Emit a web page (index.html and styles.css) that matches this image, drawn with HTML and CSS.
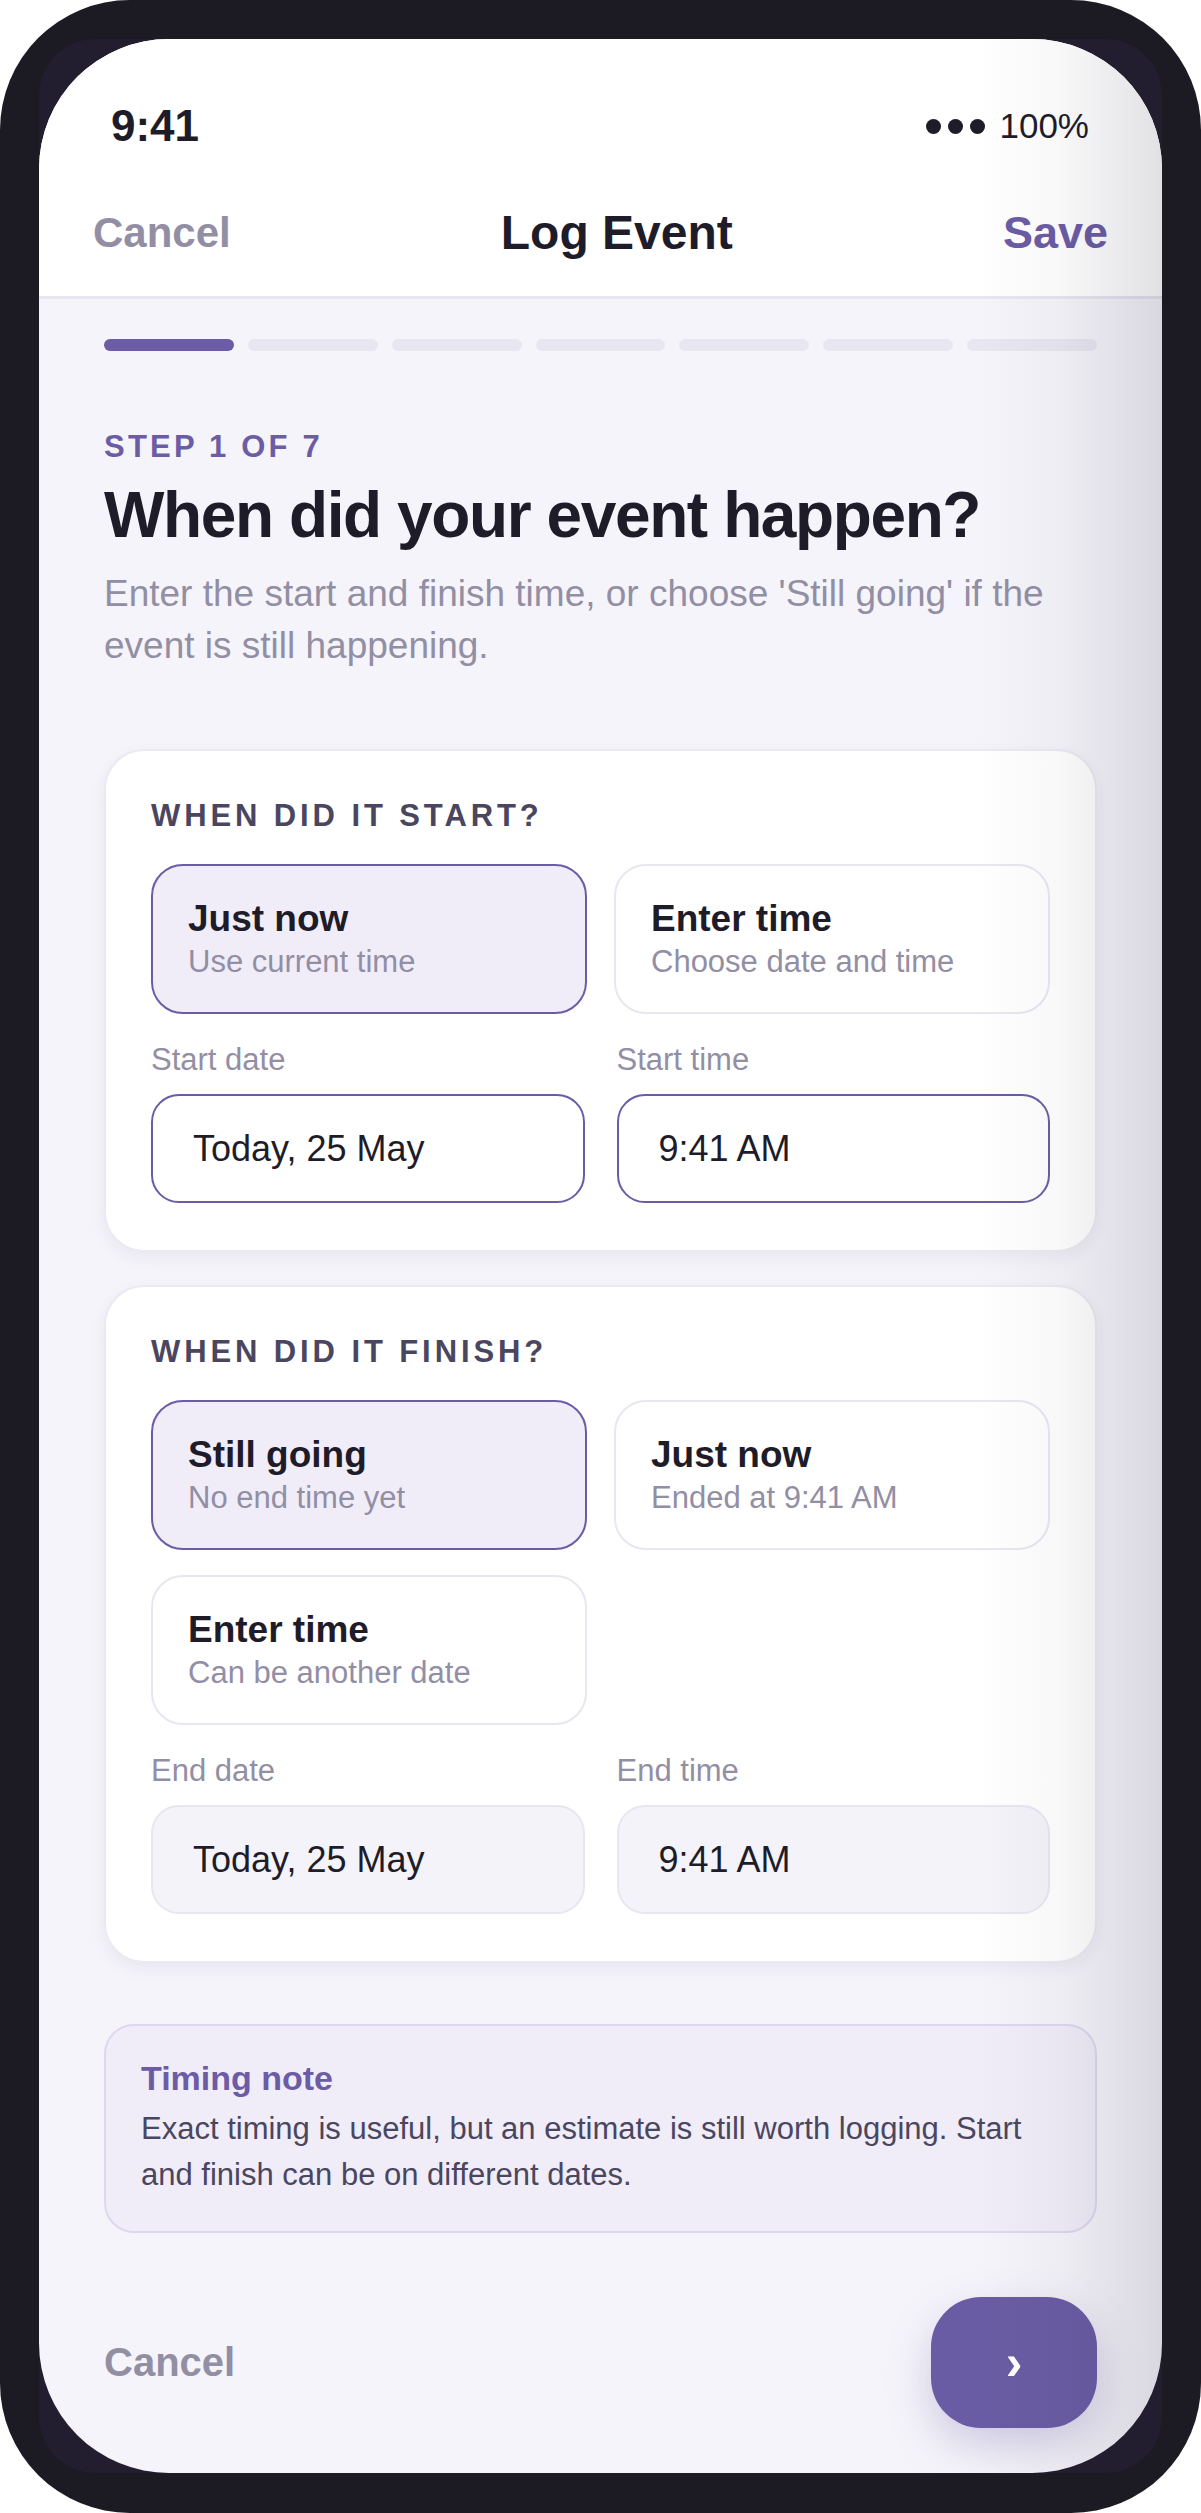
FILE: index.html
```html
<!DOCTYPE html>
<html lang="en">

<head>
    <meta charset="UTF-8">
    <meta name="viewport" content="width=device-width, initial-scale=1.0">
    <title>Log Event</title>
    <link rel="stylesheet" href="styles.css">
</head>

<body>
    <div class="phone">
        <div class="screen">
            <div class="app">
                <div class="status-bar">
                    <span class="clock">9:41</span>
                    <span class="battery">
                        <span class="dots"><i></i><i></i><i></i></span>
                        100%
                    </span>
                </div>

                <header class="nav">
                    <span class="nav-cancel">Cancel</span>
                    <h1 class="nav-title">Log Event</h1>
                    <span class="nav-save">Save</span>
                </header>

                <main class="content">
                    <div class="progress">
                        <span class="active"></span>
                        <span></span>
                        <span></span>
                        <span></span>
                        <span></span>
                        <span></span>
                        <span></span>
                    </div>

                    <p class="step">Step 1 of 7</p>
                    <h2 class="question">When did your event happen?</h2>
                    <p class="hint">Enter the start and finish time, or choose 'Still going' if the event is still happening.</p>

                    <section class="card">
                        <h3 class="card-label">When did it start?</h3>
                        <div class="options">
                            <div class="option selected">
                                <strong>Just now</strong>
                                <span>Use current time</span>
                            </div>
                            <div class="option">
                                <strong>Enter time</strong>
                                <span>Choose date and time</span>
                            </div>
                        </div>
                        <div class="fields">
                            <div class="field">
                                <label>Start date</label>
                                <div class="input">Today, 25 May</div>
                            </div>
                            <div class="field">
                                <label>Start time</label>
                                <div class="input">9:41 AM</div>
                            </div>
                        </div>
                    </section>

                    <section class="card second-card">
                        <h3 class="card-label">When did it finish?</h3>
                        <div class="options">
                            <div class="option selected">
                                <strong>Still going</strong>
                                <span>No end time yet</span>
                            </div>
                            <div class="option">
                                <strong>Just now</strong>
                                <span>Ended at 9:41 AM</span>
                            </div>
                            <div class="option">
                                <strong>Enter time</strong>
                                <span>Can be another date</span>
                            </div>
                        </div>
                        <div class="fields">
                            <div class="field">
                                <label>End date</label>
                                <div class="input disabled">Today, 25 May</div>
                            </div>
                            <div class="field">
                                <label>End time</label>
                                <div class="input disabled">9:41 AM</div>
                            </div>
                        </div>
                    </section>

                    <div class="note">
                        <h4>Timing note</h4>
                        <p>Exact timing is useful, but an estimate is still worth logging. Start and finish can be on different dates.</p>
                    </div>

                    <div class="footer">
                        <span class="footer-cancel">Cancel</span>
                        <button class="next">›</button>
                    </div>
                </main>

                <div class="vignette"></div>
            </div>
        </div>
    </div>
</body>

</html>
```

FILE: styles.css
```css
* {
    box-sizing: border-box;
}

body {
    margin: 0;
    background-color: #ffffff;
    font-family: 'Liberation Sans', Arial, sans-serif;
    color: #1f1c29;
}

h1,
h2,
h3,
h4,
p {
    margin: 0;
}

/* Marco del telefono */
.phone {
    width: 1201px;
    height: 2513px;
    padding: 39px 39px 40px;
    border-radius: 130px;
    background-color: #1c1a23;
}

.screen {
    height: 100%;
    border-radius: 56px;
    background-color: #221d2f;
}

.app {
    position: relative;
    height: 100%;
    border-radius: 130px;
    overflow: hidden;
    background-color: #f5f4fa;
}

/* Barra de estado */
.status-bar {
    display: flex;
    justify-content: space-between;
    align-items: center;
    padding: 62px 73px 0 72px;
    background-color: #ffffff;
}

.clock {
    font-size: 44px;
    font-weight: bold;
}

.battery {
    display: flex;
    align-items: center;
    font-size: 35px;
}

.dots {
    display: flex;
    gap: 7px;
    margin-right: 14px;
}

.dots i {
    width: 15px;
    height: 15px;
    border-radius: 50%;
    background-color: #1f1c29;
}

/* Cabecera */
.nav {
    display: flex;
    justify-content: space-between;
    align-items: center;
    padding: 54px 54px 36px;
    background-color: #ffffff;
    border-bottom: 3px solid #e7e5ef;
}

.nav-cancel {
    font-size: 42px;
    font-weight: bold;
    color: #928ea4;
}

.nav-title {
    font-size: 48px;
    font-weight: bold;
}

.nav-save {
    font-size: 45px;
    font-weight: bold;
    color: #6b5ca5;
}

.content {
    padding: 40px 65px 0;
}

.progress {
    display: flex;
    gap: 14px;
}

.progress span {
    flex: 1;
    height: 12px;
    border-radius: 6px;
    background-color: #e8e6f0;
}

.progress .active {
    background-color: #6b5ca5;
}

.step {
    margin-top: 78px;
    font-size: 31px;
    font-weight: bold;
    letter-spacing: 3.2px;
    text-transform: uppercase;
    color: #6b5ca5;
}

.question {
    margin-top: 12px;
    font-size: 64px;
    line-height: 1.2;
    letter-spacing: -1.4px;
}

.hint {
    margin-top: 14px;
    font-size: 37px;
    line-height: 52.4px;
    color: #928ea4;
}

/* Tarjetas */
.card {
    margin-top: 76px;
    padding: 47px 45px;
    border: 2px solid #ebe9f1;
    border-radius: 40px;
    background-color: #ffffff;
    box-shadow: 0 6px 16px rgba(40, 30, 80, 0.06);
}

.second-card {
    margin-top: 33px;
}

.card-label {
    margin-bottom: 30px;
    font-size: 31px;
    letter-spacing: 3.9px;
    text-transform: uppercase;
    color: #4a4660;
}

.options {
    display: grid;
    grid-template-columns: 1fr 1fr;
    gap: 25px 27px;
}

.option {
    display: flex;
    flex-direction: column;
    padding: 32px 35px 32px;
    border: 2px solid #e8e6f0;
    border-radius: 32px;
    background-color: #ffffff;
}

.option strong {
    font-size: 37px;
}

.option span {
    margin-top: 4px;
    font-size: 31px;
    color: #928ea4;
}

.option.selected {
    border-color: #6b5ca5;
    background-color: #f0edf9;
}

.fields {
    display: grid;
    grid-template-columns: 1fr 1fr;
    gap: 32px;
    margin-top: 28px;
}

.field label {
    display: block;
    margin-bottom: 16px;
    font-size: 31px;
    color: #928ea4;
}

.input {
    padding: 32px 40px 31px;
    border: 2px solid #6b5ca5;
    border-radius: 28px;
    background-color: #ffffff;
    font-size: 36px;
}

.input.disabled {
    border-color: #e8e6f0;
    background-color: #f4f3f9;
}

/* Nota */
.note {
    margin-top: 61px;
    padding: 33px 35px 32px;
    border: 2px solid #ddd7ef;
    border-radius: 30px;
    background-color: #f0edf9;
}

.note h4 {
    font-size: 34px;
    color: #6b5ca5;
}

.note p {
    margin-top: 8px;
    font-size: 31px;
    line-height: 1.5;
    color: #4a4660;
}

.footer {
    display: flex;
    justify-content: space-between;
    align-items: center;
    margin-top: 64px;
}

.footer-cancel {
    font-size: 40px;
    font-weight: bold;
    color: #928ea4;
}

.next {
    width: 166px;
    height: 131px;
    border: none;
    border-radius: 50px;
    background-color: #6a5ca4;
    color: #ffffff;
    font-family: 'Liberation Sans', Arial, sans-serif;
    font-size: 50px;
    font-weight: bold;
    box-shadow: 0 18px 44px rgba(107, 92, 165, 0.28);
}

/* Sombra lateral sobre la pantalla */
.vignette {
    position: absolute;
    top: 0;
    right: 0;
    bottom: 0;
    width: 185px;
    pointer-events: none;
    background: linear-gradient(to right, rgba(28, 24, 48, 0) 0%, rgba(28, 24, 48, 0.03) 45%, rgba(28, 24, 48, 0.13) 100%);
}
```
